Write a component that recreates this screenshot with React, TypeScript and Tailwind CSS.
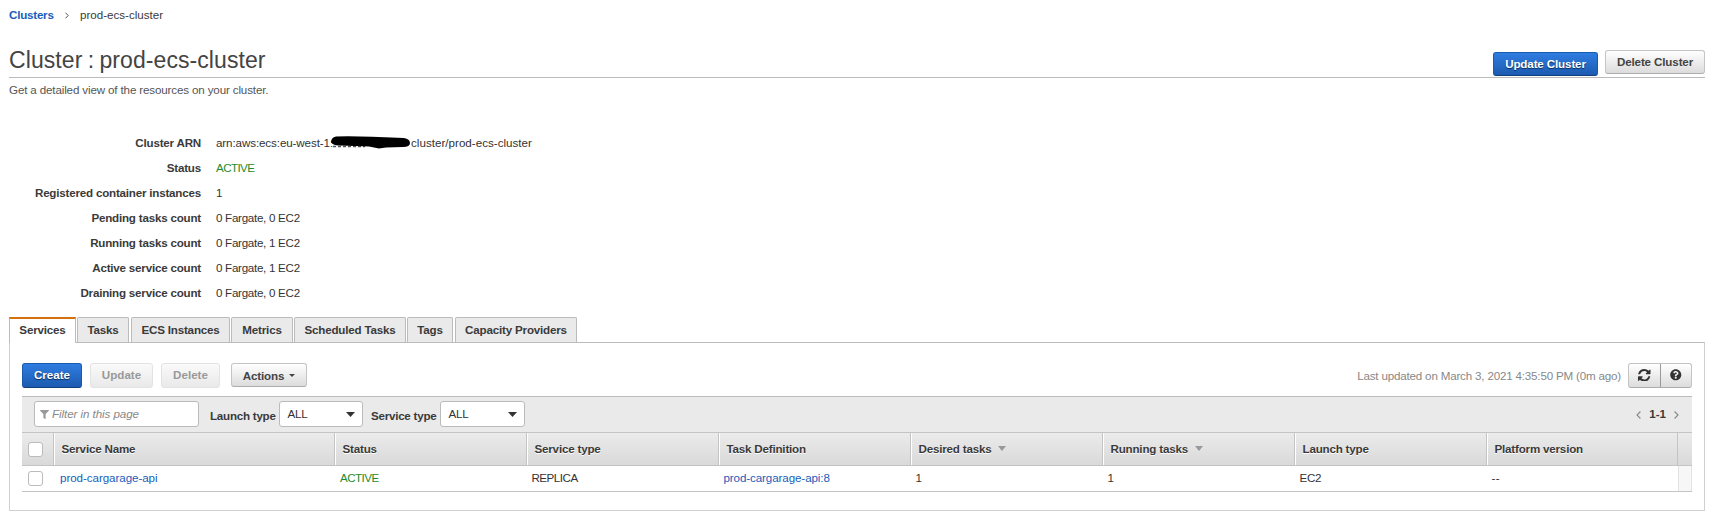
import type { ReactNode } from "react";
import { FaFilter, FaQuestionCircle } from "react-icons/fa";

const raised =
  "border border-[#c4c4c4] border-b-[#adadad] bg-linear-to-b from-white to-[#dcdcdc] text-[#444]";
const primary =
  "border border-[#1a5aad] border-b-[#123f7c] bg-linear-to-b from-[#2f7de1] to-[#1c5bb0] text-white [text-shadow:0_1px_1px_#0a2a55]";
const disabled = "border border-[#e3e3e3] bg-linear-to-b from-[#fafafa] to-[#e9e9e9] text-[#999]";

function Button({ className, children }: { className: string; children: ReactNode }) {
  return (
    <button className={`flex shrink-0 items-center justify-center rounded-[3px] font-bold whitespace-nowrap ${className}`}>
      {children}
    </button>
  );
}

function Caret({ className }: { className: string }) {
  return (
    <svg viewBox="0 0 8 5" preserveAspectRatio="none" className={`shrink-0 fill-current ${className}`}>
      <path d="M0 0h8L4 5z" />
    </svg>
  );
}

function Chevron({ className, left = false }: { className: string; left?: boolean }) {
  return (
    <svg viewBox="0 0 5 8" fill="none" stroke="currentColor" strokeWidth="1.100" className={`shrink-0 ${className}`}>
      <path d={left ? "M4.400 .5 1 4l3.400 3.500" : "M.6 .5 4 4 .6 7.500"} />
    </svg>
  );
}

function RefreshIcon() {
  return (
    <svg viewBox="0 0 1536 1536" className="h-[12.5px] w-[12.5px] fill-[#333]">
      <path d="M1511 928q0 5-1 7-64 268-268 434.500T764 1536q-146 0-282.500-55T238 1324l-129 129q-19 19-45 19t-45-19-19-45V960q0-26 19-45t45-19h448q26 0 45 19t19 45-19 45l-137 137q71 66 161 102t187 36q134 0 250-65t186-179q11-17 53-117 8-23 30-23h192q13 0 22.500 9.500t9.500 22.500zm25-800v448q0 26-19 45t-45 19h-448q-26 0-45-19t-19-45 19-45l138-138Q969 256 768 256q-134 0-250 65T332 500q-11 17-53 117-8 23-30 23H50q-13 0-22.500-9.500T18 608v-7q65-268 270-434.500T768 0q146 0 284 55.500T1297 212l130-129q19-19 45-19t45 19 19 45z" />
    </svg>
  );
}

const details = [
  { label: "Status", value: "ACTIVE", style: "text-[#1f8b2c] tracking-[-0.6px]" },
  { label: "Registered container instances", value: "1", style: "" },
  { label: "Pending tasks count", value: "0 Fargate, 0 EC2", style: "tracking-[-0.28px]" },
  { label: "Running tasks count", value: "0 Fargate, 1 EC2", style: "tracking-[-0.28px]" },
  { label: "Active service count", value: "0 Fargate, 1 EC2", style: "tracking-[-0.28px]" },
  { label: "Draining service count", value: "0 Fargate, 0 EC2", style: "tracking-[-0.28px]" },
];

const tabs = [
  { name: "Tasks", width: "ml-px w-[52px]" },
  { name: "ECS Instances", width: "ml-[2px] w-[99px]" },
  { name: "Metrics", width: "ml-px w-[62px]" },
  { name: "Scheduled Tasks", width: "ml-px w-[112px]" },
  { name: "Tags", width: "ml-px w-[46px]" },
  { name: "Capacity Providers", width: "ml-[2px] w-[122px]" },
];

const columns = [
  { title: "Service Name", sortable: false, value: "prod-cargarage-api", style: "pl-[6px] text-[#1a5dba] tracking-[-0.06px]" },
  { title: "Status", sortable: false, value: "ACTIVE", style: "pl-[5px] text-[#1f8b2c] tracking-[-0.55px]" },
  { title: "Service type", sortable: false, value: "REPLICA", style: "pl-[4.5px] tracking-[-0.5px]" },
  { title: "Task Definition", sortable: false, value: "prod-cargarage-api:8", style: "pl-[4.5px] text-[#1a5dba] tracking-[-0.1px]" },
  { title: "Desired tasks", sortable: true, value: "1", style: "pl-[4.5px]" },
  { title: "Running tasks", sortable: true, value: "1", style: "pl-[4.5px]" },
  { title: "Launch type", sortable: false, value: "EC2", style: "pl-[4.5px] tracking-[-0.35px]" },
  { title: "Platform version", sortable: false, value: "--", style: "pl-[4.5px] tracking-[0.4px]" },
];

const tableGrid = "grid grid-cols-[32px_281px_192px_192px_192px_192px_192px_192px_191px_14px]";

function DetailRow({ label, children }: { label: string; children: ReactNode }) {
  return (
    <div className="flex h-[25px] items-center">
      <dt className="w-[201px] text-right font-bold tracking-[-0.2px]">{label}</dt>
      <dd className="ml-[15px] flex items-center text-[#333]">{children}</dd>
    </div>
  );
}

function Select({ width }: { width: string }) {
  return (
    <div className={`flex h-[26px] items-center justify-between rounded-[3px] border border-[#bbb] bg-white pr-[7px] pl-[7.5px] text-[#333] ${width}`}>
      <span className="-mt-px tracking-[-0.2px]">ALL</span>
      <Caret className="h-[5px] w-[9px] text-[#333]" />
    </div>
  );
}

export default function App() {
  return (
    <div className="h-[524px] w-[1716px] overflow-hidden bg-white pt-[7px] pr-[11px] pl-[9px] font-['Liberation_Sans',Arial,sans-serif] text-[11.6px] leading-[15px] whitespace-nowrap text-[#3a3a3a]">
      <nav className="flex h-[15px] items-center">
        <a className="w-[56px] font-bold tracking-[-0.22px] text-[#1a5dba]">Clusters</a>
        <Chevron className="mt-px h-[7px] w-[4px]" />
        <span className="ml-[11px]">prod-ecs-cluster</span>
      </nav>

      <header className="flex h-[56px] justify-between border-b border-[#bbb]">
        <h1 className="mt-[25px] text-[23px] leading-[26px] tracking-[0.08px] text-[#444] [word-spacing:-1.2px]">Cluster : prod-ecs-cluster</h1>
        <div className="mt-[28px] flex gap-[7px] tracking-[-0.13px]">
          <Button className={`mt-[2px] h-6 w-[105px] pb-[2px] ${primary}`}>Update Cluster</Button>
          <Button className={`h-6 w-[100px] pb-[2px] ${raised}`}>Delete Cluster</Button>
        </div>
      </header>
      <p className="mt-[4px] tracking-[-0.14px] text-[#555]">Get a detailed view of the resources on your cluster.</p>

      <dl className="mt-[33px] -ml-[9px]">
        <DetailRow label="Cluster ARN">
          <span className="w-[114px] tracking-[-0.1px]">arn:aws:ecs:eu-west-1:</span>
          <svg viewBox="0 0 82 14" className="-mt-px h-[14px] w-[82px] shrink-0">
            <path d="M3 11.500h32" stroke="#555" strokeWidth="1.500" strokeDasharray="3 2" />
            <path d="M6 1.500q14-.5 36 .3l32 1.200q6 1 6 5 0 4-7 4l-17 .6-7 .8-10-2L10 10.500Q4 11 1 7.500q0-5 5-6z" />
          </svg>
          <span className="-ml-px tracking-[0.02px]">cluster/prod-ecs-cluster</span>
        </DetailRow>
        {details.map((d) => (
          <DetailRow key={d.label} label={d.label}>
            <span className={d.style}>{d.value}</span>
          </DetailRow>
        ))}
      </dl>

      <div className="mt-[12px] flex h-[26px] font-bold tracking-[-0.18px]">
        <div className="z-10 flex w-[67px] items-center justify-center border-x border-t-2 border-x-[#bbb] border-t-[#d5700f] bg-white pb-[3px]">
          Services
        </div>
        {tabs.map((t) => (
          <div key={t.name} className={`flex h-[25px] items-center justify-center rounded-t-[2px] border border-b-0 border-[#bbb] bg-[#eaeaea] pb-[2px] ${t.width}`}>
            {t.name}
          </div>
        ))}
      </div>

      <main className="-mt-px h-[169px] border border-[#d0d0d0] border-t-[#bbb] px-3 pt-5">
        <div className="flex h-[25px] items-start">
          <Button className={`h-[25px] w-[60px] pb-[2px] ${primary}`}>Create</Button>
          <Button className={`ml-2 h-[25px] w-[63px] pb-[2px] ${disabled}`}>Update</Button>
          <Button className={`ml-2 h-[25px] w-[59px] pb-[2px] ${disabled}`}>Delete</Button>
          <Button className={`ml-[11px] h-6 w-[76px] gap-[5px] tracking-[-0.15px] ${raised}`}>
            Actions
            <Caret className="h-[3px] w-[6px]" />
          </Button>
          <span className="mt-[5px] ml-auto tracking-[-0.18px] text-[#888]">Last updated on March 3, 2021 4:35:50 PM (0m ago)</span>
          <div className={`ml-[7px] flex h-[25px] w-[64px] rounded-[3px] ${raised}`}>
            <button className="flex flex-1 items-center justify-center border-r border-[#999] pb-px">
              <RefreshIcon />
            </button>
            <button className="flex flex-1 items-center justify-center pb-px">
              <FaQuestionCircle className="h-[11.5px] w-[11.5px] text-[#333]" />
            </button>
          </div>
        </div>

        <section className="mt-2 w-[1670px]">
          <div className="flex h-[36px] items-start border-t border-[#bbb] bg-[#eaeaea] pt-1 pl-3">
            <div className="flex h-[26px] w-[165px] items-center gap-[3px] rounded-[3px] border border-[#bbb] bg-white pl-[5px] text-[#888] italic">
              <FaFilter className="h-[9px] w-[9px] text-[#999]" />
              <span className="-mt-px tracking-[-0.07px]">Filter in this page</span>
            </div>
            <label className="mt-[7px] ml-[11px] w-[69px] font-bold tracking-[-0.24px]">Launch type</label>
            <Select width="w-[84px]" />
            <label className="mt-[7px] ml-[8px] w-[69px] font-bold tracking-[-0.24px]">Service type</label>
            <Select width="w-[85px]" />
            <div className="mt-[5px] mr-[13px] ml-auto flex items-center gap-[8px] font-bold">
              <Chevron left className="mt-[3px] h-[8px] w-[5px] text-[#888]" />
              1-1
              <Chevron className="mt-[3px] h-[8px] w-[5px] text-[#888]" />
            </div>
          </div>

          <div className={`h-[34px] border-y border-[#c4c4c4] bg-linear-to-b from-[#ebebeb] to-[#d9d9d9] font-bold tracking-[-0.19px] ${tableGrid}`}>
            <div className="flex items-center border-r border-[#c4c4c4] pl-[6px]">
              <span className="h-[15px] w-[15px] rounded-[3px] border border-[#bbb] bg-white" />
            </div>
            {columns.map((c) => (
              <div key={c.title} className="flex items-center border-r border-l border-r-[#c4c4c4] border-l-white pb-[2px] pl-[6.5px] [text-shadow:0_1px_0_#fff]">
                {c.title}
                {c.sortable && <Caret className="mt-px ml-[7px] h-[5px] w-[8px] text-[#999]" />}
              </div>
            ))}
            <div />
          </div>

          <div className={`h-[26px] border-b border-[#c4c4c4] text-[#333] ${tableGrid}`}>
            <div className="flex items-center pl-[6px]">
              <span className="h-[15px] w-[15px] rounded-[3px] border border-[#bbb] bg-white" />
            </div>
            {columns.map((c) => (
              <div key={c.title} className={`flex items-center pb-[3px] ${c.style}`}>
                {c.value}
              </div>
            ))}
            <div className="border-x border-[#e2e2e2] bg-[#f7f7f7]" />
          </div>
        </section>
      </main>
    </div>
  );
}
